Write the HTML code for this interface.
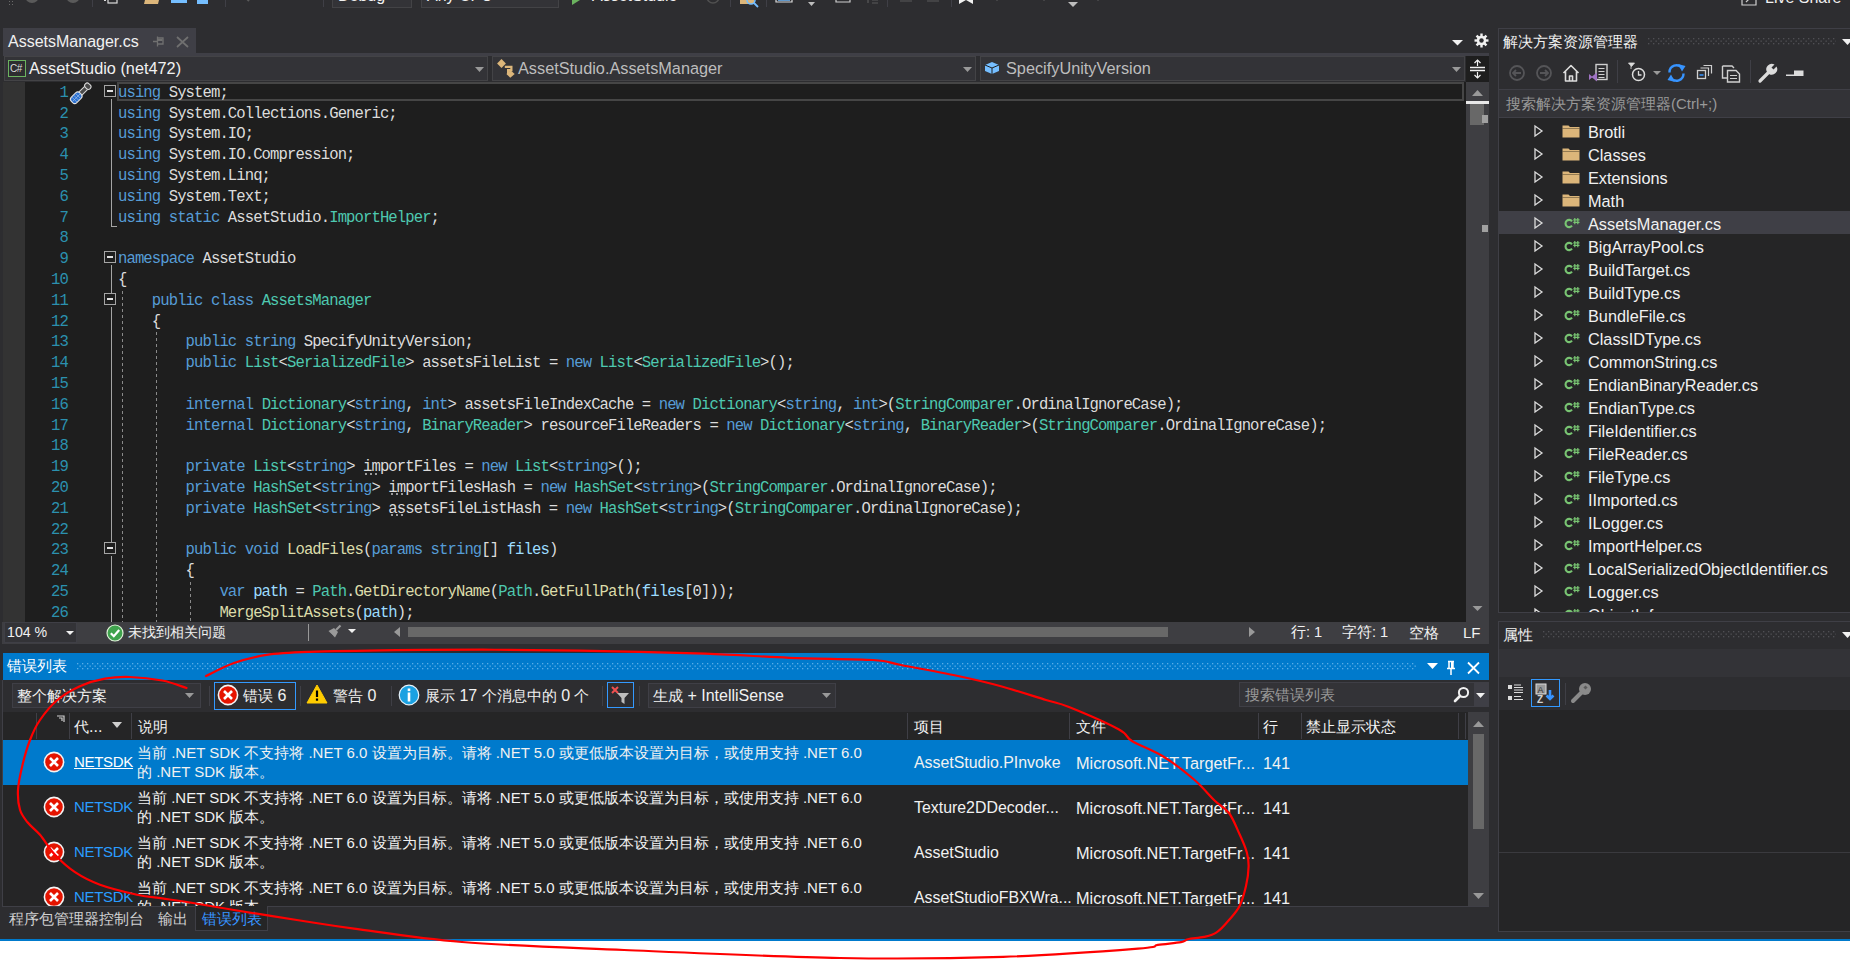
<!DOCTYPE html>
<html><head><meta charset="utf-8">
<style>
*{margin:0;padding:0;box-sizing:border-box}
html,body{width:1850px;height:961px;overflow:hidden;background:#2d2d30;font-family:"Liberation Sans",sans-serif;font-size:16px;color:#f1f1f1}
.a{position:absolute}
.t{position:absolute;white-space:nowrap;line-height:1}
.cl{position:absolute;left:118px;height:21px;line-height:20.8px;font-family:"Liberation Mono",monospace;font-size:15.6px;letter-spacing:-0.91px;white-space:pre;color:#dcdcdc}
.ln{position:absolute;left:20px;width:48px;text-align:right;height:21px;line-height:20.8px;font-family:"Liberation Mono",monospace;font-size:15.6px;letter-spacing:-0.91px;color:#2b91af}
.k{color:#569cd6}.ty{color:#4ec9b0}.m{color:#dcdcaa}.p{color:#9cdcfe}
svg{position:absolute;overflow:visible}
.c{font-size:15px}
</style></head><body>

<div class="a" style="left:0px;top:0px;width:1850px;height:28px;background:#2d2d30;"></div>
<div class="a" style="left:8px;top:0px;width:6px;height:7px;background-image:radial-gradient(circle,#6a6a6a 0.7px,transparent 1px);background-size:3px 3px"></div>
<svg style="left:0;top:0" width="1850" height="14">
<circle cx="32" cy="-4" r="7" fill="#5a5a5a"/><circle cx="73" cy="-4" r="7" fill="#5a5a5a"/>
<path d="M92.5 0 V7" stroke="#3f3f46"/>
<rect x="108" y="-6" width="9" height="9" stroke="#dcdcdc" stroke-width="1.2" fill="none"/><rect x="104" y="-1" width="2" height="2" fill="#dcdcdc"/>
<path d="M144 4 L146 -4 H160 L158 4 Z" fill="#dcb67a"/>
<rect x="171" y="-6" width="16" height="9" fill="#75beff"/><rect x="197" y="-6" width="11" height="10" fill="#75beff"/>
<path d="M225.5 0 V7" stroke="#3f3f46"/>
<path d="M242 -6 L249 1" stroke="#5a5a5a" stroke-width="2"/><path d="M291 -6 L286 -1" stroke="#5a5a5a" stroke-width="2"/>
<path d="M323.5 0 V7" stroke="#3f3f46"/>
<path d="M572 -6 L580 0 L572 5 Z" fill="#6bb35f"/>
<circle cx="713" cy="-3" r="6" stroke="#505050" stroke-width="1.5" fill="none"/>
<path d="M730.5 0 V7" stroke="#3f3f46"/><path d="M887.5 0 V7" stroke="#3f3f46"/>
<path d="M740 -4 H754 V4 H740 Z" fill="#dcb67a"/><circle cx="751" cy="0" r="4" stroke="#75beff" stroke-width="1.6" fill="none"/><path d="M754 3 L758 7" stroke="#75beff" stroke-width="1.8"/>
<path d="M766.5 0 V7" stroke="#3f3f46"/>
<path d="M776 -4 V2 H792 V-4" stroke="#dcdcdc" stroke-width="1.2" fill="none"/><path d="M778 0 H790" stroke="#75beff" stroke-width="1.5"/>
<path d="M808 2 H815 L811.5 6 Z" fill="#bdbdbd"/>
<path d="M836 -4 V2 H850 V-4" stroke="#cfcfcf" stroke-width="1.2" fill="none"/>
<path d="M868 -4 V3 M872 -4 H878 M872 0 H878 M872 3 H878" stroke="#5a5a5a" stroke-width="1.2" fill="none"/>
<path d="M900 1 H912 M927 1 H939" stroke="#5a5a5a" stroke-width="1.2"/>
<path d="M951.5 0 V7" stroke="#3f3f46"/>
<path d="M959 -6 V4 L966 0 L973 4 V-6" fill="#f1f1f1"/>
<path d="M993 -3 L997 1 L1001 -3" fill="#5a5a5a"/><path d="M1040 -3 L1044 1 L1048 -3" fill="#5a5a5a"/><path d="M1094 -3 L1098 1 L1102 -3" fill="#5a5a5a"/>
<path d="M1068 2 H1078 L1073 7 Z" fill="#bdbdbd"/>
<path d="M1742 -4 V5 H1756 V-4" stroke="#cfcfcf" stroke-width="1.2" fill="none"/><path d="M1746 2 L1752 -4" stroke="#cfcfcf" stroke-width="1.2"/>
</svg>
<div class="a" style="left:332px;top:-20px;width:80px;height:28px;background:#333337;border:1px solid #434346"></div>
<div class="t" style="left:338px;top:-12px;font-size:16px;color:#f1f1f1">Debug</div>
<div class="a" style="left:421px;top:-20px;width:138px;height:28px;background:#333337;border:1px solid #434346"></div>
<div class="t" style="left:427px;top:-12px;font-size:16px;color:#f1f1f1">Any CPU</div>
<div class="t" style="left:592px;top:-12px;font-size:16px;color:#f1f1f1">AssetStudio</div>
<div class="t" style="left:1765px;top:-10px;font-size:16px;color:#f1f1f1">Live Share</div>
<div class="a" style="left:3px;top:28px;width:193px;height:25px;background:#3f3f46;"></div>
<div class="t" style="left:8px;top:34px;color:#f1f1f1;font-size:16px;">AssetsManager.cs</div>
<svg style="left:150px;top:34px" width="16" height="14" viewBox="0 0 16 14">
<path d="M3 7.5 H7.5 M7.5 2.5 V12.5" stroke="#707070" stroke-width="1.3" fill="none"/>
<path d="M7.5 4 H13 V10 H7.5" stroke="#707070" stroke-width="1.3" fill="none"/><rect x="8" y="5" width="4.5" height="2" fill="#707070"/>
</svg>
<svg style="left:176px;top:36px" width="13" height="12" viewBox="0 0 13 12">
<path d="M1 1 L12 11 M12 1 L1 11" stroke="#707070" stroke-width="1.7"/>
</svg>
<svg style="left:1452px;top:39px" width="12" height="8"><path d="M0 1 H11 L5.5 6.5 Z" fill="#f1f1f1"/></svg>
<svg style="left:1474px;top:33px" width="15" height="15" viewBox="0 0 15 15">
<g fill="#f1f1f1"><circle cx="7.5" cy="7.5" r="4.8"/>
<rect x="6.3" y="0.5" width="2.4" height="14"/><rect x="0.5" y="6.3" width="14" height="2.4"/>
<rect x="6.3" y="0.5" width="2.4" height="14" transform="rotate(45 7.5 7.5)"/><rect x="6.3" y="0.5" width="2.4" height="14" transform="rotate(-45 7.5 7.5)"/>
</g><circle cx="7.5" cy="7.5" r="2.2" fill="#2d2d30"/></svg>
<div class="a" style="left:3px;top:53px;width:1486px;height:3px;background:#3f3f46;"></div>
<div class="a" style="left:3px;top:56px;width:1486px;height:26px;background:#2d2d30;"></div>
<div class="a" style="left:4px;top:56px;width:484px;height:25px;background:#333337;border:1px solid #434346"></div>
<svg style="left:475px;top:67px" width="9" height="5"><path d="M0 0 H9 L4.5 5 Z" fill="#999999"/></svg>
<div class="a" style="left:492px;top:56px;width:484px;height:25px;background:#333337;border:1px solid #434346"></div>
<svg style="left:963px;top:67px" width="9" height="5"><path d="M0 0 H9 L4.5 5 Z" fill="#999999"/></svg>
<div class="a" style="left:980px;top:56px;width:485px;height:25px;background:#333337;border:1px solid #434346"></div>
<svg style="left:1452px;top:67px" width="9" height="5"><path d="M0 0 H9 L4.5 5 Z" fill="#999999"/></svg>
<div class="a" style="left:8px;top:60px;width:18px;height:17px;border:1.5px solid #6bb35f;background:#2d2d30"></div>
<div class="t" style="left:10px;top:64px;font-size:10px;color:#dcdcdc;letter-spacing:-0.5px">C#</div>
<div class="t" style="left:29px;top:60px;color:#f1f1f1;font-size:16.3px;">AssetStudio (net472)</div>
<svg style="left:496px;top:58px" width="22" height="22" viewBox="0 0 20 20">
<path d="M5 1 L9 5 L5 9 L1 5 Z" fill="#dcb67a"/>
<path d="M8 8 H14 V11 H11 V14 H14" stroke="#dcb67a" stroke-width="2" fill="none"/>
<path d="M13 11 L17 14.5 L13 18 L9.5 14.5 Z" fill="#dcb67a"/>
</svg>
<div class="t" style="left:518px;top:60px;color:#bdbdbd;font-size:16.3px;">AssetStudio.AssetsManager</div>
<svg style="left:984px;top:61px" width="16" height="14" viewBox="0 0 16 14">
<path d="M1 4 L8 1 L15 4 L15 10 L8 13 L1 10 Z" fill="#75beff"/>
<path d="M1 4 L8 7 L15 4 M8 7 V13" stroke="#1e1e1e" stroke-width="1" fill="none"/>
</svg>
<div class="t" style="left:1006px;top:60px;color:#bdbdbd;font-size:16.3px;">SpecifyUnityVersion</div>
<div class="a" style="left:1466px;top:56px;width:23px;height:26px;background:#1e1e1e;"></div>
<svg style="left:1469px;top:59px" width="17" height="20" viewBox="0 0 17 20">
<path d="M1 8.5 H16 M1 11.5 H16" stroke="#f1f1f1" stroke-width="1.5"/>
<path d="M8.5 1 V7 M8.5 13 V19" stroke="#f1f1f1" stroke-width="1.2"/>
<path d="M5.5 4 L8.5 1 L11.5 4 M5.5 16 L8.5 19 L11.5 16" stroke="#f1f1f1" stroke-width="1.2" fill="none"/>
</svg>
<div class="a" style="left:3px;top:82px;width:1463px;height:540px;background:#1e1e1e;"></div>
<div class="a" style="left:3px;top:82px;width:22px;height:540px;background:#333333;"></div>
<div class="a" style="left:117px;top:82px;width:1347px;height:19px;border:2px solid #464646"></div>
<div class="ln" style="top:82.70px">1</div>
<div class="cl" style="top:82.70px"><span class="k">using</span> System;</div>
<div class="ln" style="top:103.50px">2</div>
<div class="cl" style="top:103.50px"><span class="k">using</span> System.Collections.Generic;</div>
<div class="ln" style="top:124.30px">3</div>
<div class="cl" style="top:124.30px"><span class="k">using</span> System.IO;</div>
<div class="ln" style="top:145.10px">4</div>
<div class="cl" style="top:145.10px"><span class="k">using</span> System.IO.Compression;</div>
<div class="ln" style="top:165.90px">5</div>
<div class="cl" style="top:165.90px"><span class="k">using</span> System.Linq;</div>
<div class="ln" style="top:186.70px">6</div>
<div class="cl" style="top:186.70px"><span class="k">using</span> System.Text;</div>
<div class="ln" style="top:207.50px">7</div>
<div class="cl" style="top:207.50px"><span class="k">using</span> <span class="k">static</span> AssetStudio.<span class="ty">ImportHelper</span>;</div>
<div class="ln" style="top:228.30px">8</div>
<div class="ln" style="top:249.10px">9</div>
<div class="cl" style="top:249.10px"><span class="k">namespace</span> AssetStudio</div>
<div class="ln" style="top:269.90px">10</div>
<div class="cl" style="top:269.90px">{</div>
<div class="ln" style="top:290.70px">11</div>
<div class="cl" style="top:290.70px">    <span class="k">public</span> <span class="k">class</span> <span class="ty">AssetsManager</span></div>
<div class="ln" style="top:311.50px">12</div>
<div class="cl" style="top:311.50px">    {</div>
<div class="ln" style="top:332.30px">13</div>
<div class="cl" style="top:332.30px">        <span class="k">public</span> <span class="k">string</span> SpecifyUnityVersion;</div>
<div class="ln" style="top:353.10px">14</div>
<div class="cl" style="top:353.10px">        <span class="k">public</span> <span class="ty">List</span>&lt;<span class="ty">SerializedFile</span>&gt; assetsFileList = <span class="k">new</span> <span class="ty">List</span>&lt;<span class="ty">SerializedFile</span>&gt;();</div>
<div class="ln" style="top:373.90px">15</div>
<div class="ln" style="top:394.70px">16</div>
<div class="cl" style="top:394.70px">        <span class="k">internal</span> <span class="ty">Dictionary</span>&lt;<span class="k">string</span>, <span class="k">int</span>&gt; assetsFileIndexCache = <span class="k">new</span> <span class="ty">Dictionary</span>&lt;<span class="k">string</span>, <span class="k">int</span>&gt;(<span class="ty">StringComparer</span>.OrdinalIgnoreCase);</div>
<div class="ln" style="top:415.50px">17</div>
<div class="cl" style="top:415.50px">        <span class="k">internal</span> <span class="ty">Dictionary</span>&lt;<span class="k">string</span>, <span class="ty">BinaryReader</span>&gt; resourceFileReaders = <span class="k">new</span> <span class="ty">Dictionary</span>&lt;<span class="k">string</span>, <span class="ty">BinaryReader</span>&gt;(<span class="ty">StringComparer</span>.OrdinalIgnoreCase);</div>
<div class="ln" style="top:436.30px">18</div>
<div class="ln" style="top:457.10px">19</div>
<div class="cl" style="top:457.10px">        <span class="k">private</span> <span class="ty">List</span>&lt;<span class="k">string</span>&gt; importFiles = <span class="k">new</span> <span class="ty">List</span>&lt;<span class="k">string</span>&gt;();</div>
<div class="ln" style="top:477.90px">20</div>
<div class="cl" style="top:477.90px">        <span class="k">private</span> <span class="ty">HashSet</span>&lt;<span class="k">string</span>&gt; importFilesHash = <span class="k">new</span> <span class="ty">HashSet</span>&lt;<span class="k">string</span>&gt;(<span class="ty">StringComparer</span>.OrdinalIgnoreCase);</div>
<div class="ln" style="top:498.70px">21</div>
<div class="cl" style="top:498.70px">        <span class="k">private</span> <span class="ty">HashSet</span>&lt;<span class="k">string</span>&gt; assetsFileListHash = <span class="k">new</span> <span class="ty">HashSet</span>&lt;<span class="k">string</span>&gt;(<span class="ty">StringComparer</span>.OrdinalIgnoreCase);</div>
<div class="ln" style="top:519.50px">22</div>
<div class="ln" style="top:540.30px">23</div>
<div class="cl" style="top:540.30px">        <span class="k">public</span> <span class="k">void</span> <span class="m">LoadFiles</span>(<span class="k">params</span> <span class="k">string</span>[] <span class="p">files</span>)</div>
<div class="ln" style="top:561.10px">24</div>
<div class="cl" style="top:561.10px">        {</div>
<div class="ln" style="top:581.90px">25</div>
<div class="cl" style="top:581.90px">            <span class="k">var</span> <span class="p">path</span> = <span class="ty">Path</span>.<span class="m">GetDirectoryName</span>(<span class="ty">Path</span>.<span class="m">GetFullPath</span>(<span class="p">files</span>[0]));</div>
<div class="ln" style="top:602.70px">26</div>
<div class="cl" style="top:602.70px">            <span class="m">MergeSplitAssets</span>(<span class="p">path</span>);</div>
<div class="a" style="left:104px;top:84.7px;width:12px;height:12px;border:1px solid #a5a5a5;background:#1e1e1e"></div>
<div class="a" style="left:107px;top:89.7px;width:6px;height:2px;background:#e0e0e0"></div>
<div class="a" style="left:104px;top:251.1px;width:12px;height:12px;border:1px solid #a5a5a5;background:#1e1e1e"></div>
<div class="a" style="left:107px;top:256.1px;width:6px;height:2px;background:#e0e0e0"></div>
<div class="a" style="left:104px;top:292.7px;width:12px;height:12px;border:1px solid #a5a5a5;background:#1e1e1e"></div>
<div class="a" style="left:107px;top:297.7px;width:6px;height:2px;background:#e0e0e0"></div>
<div class="a" style="left:104px;top:542.3px;width:12px;height:12px;border:1px solid #a5a5a5;background:#1e1e1e"></div>
<div class="a" style="left:107px;top:547.3px;width:6px;height:2px;background:#e0e0e0"></div>
<div class="a" style="left:110.5px;top:98.7px;width:1px;height:127.8px;background:#a5a5a5"></div>
<div class="a" style="left:110.5px;top:225.5px;width:6px;height:1.5px;background:#a5a5a5"></div>
<div class="a" style="left:110.5px;top:265.1px;width:1px;height:27.6px;background:#a5a5a5"></div>
<div class="a" style="left:110.5px;top:306.7px;width:1px;height:235.6px;background:#a5a5a5"></div>
<div class="a" style="left:110.5px;top:556.3px;width:1px;height:65.7px;background:#a5a5a5"></div>
<div class="a" style="left:122px;top:290.7px;width:1px;height:331.3px;background:repeating-linear-gradient(#8a8a8a 0 3px,transparent 3px 6px)"></div>
<div class="a" style="left:156px;top:332.3px;width:1px;height:289.7px;background:repeating-linear-gradient(#8a8a8a 0 3px,transparent 3px 6px)"></div>
<div class="a" style="left:190px;top:581.9px;width:1px;height:40.1px;background:repeating-linear-gradient(#8a8a8a 0 3px,transparent 3px 6px)"></div>
<svg style="left:0;top:0" width="200" height="120">
<g transform="translate(0.5 1.5) rotate(-45 80 92) translate(80 92) scale(0.86) translate(-80 -92)">
<rect x="79" y="89.5" width="13" height="5" rx="1" fill="#4a4a4a" stroke="#d8d8d8" stroke-width="1.2"/>
<rect x="89" y="88" width="6" height="8" rx="3" fill="#4a4a4a" stroke="#d8d8d8" stroke-width="1.2"/>
<rect x="66" y="87.5" width="14" height="9" rx="3.5" fill="#2a6fcf" stroke="#e0e0e0" stroke-width="1.3"/>
<path d="M70 88 V96 M73 88 V96 M76 88 V96 M67 92 H80" stroke="#a8c8f0" stroke-width="0.7"/>
</g></svg>
<div class="a" style="left:1466px;top:82px;width:23px;height:540px;background:#3e3e42;"></div>
<svg style="left:1466px;top:82px" width="23" height="540"><path d="M6 14 L11.5 8 L17 14 Z" fill="#999"/><path d="M6.5 524 L11.5 529 L16.5 524 Z" fill="#999"/></svg>
<div class="a" style="left:1466px;top:101px;width:23px;height:3px;background:#e8e8e8;"></div>
<div class="a" style="left:1470px;top:104px;width:14px;height:21px;background:#686868;"></div>
<div class="a" style="left:1482px;top:115px;width:6px;height:8px;background:#a0a0a0;"></div>
<div class="a" style="left:1482px;top:225px;width:6px;height:7px;background:#a0a0a0;"></div>
<div class="a" style="left:365px;top:472.6px;width:2px;height:2px;background:#9a9a9a"></div>
<div class="a" style="left:370px;top:472.6px;width:2px;height:2px;background:#9a9a9a"></div>
<div class="a" style="left:375px;top:472.6px;width:2px;height:2px;background:#9a9a9a"></div>
<div class="a" style="left:391px;top:493.4px;width:2px;height:2px;background:#9a9a9a"></div>
<div class="a" style="left:396px;top:493.4px;width:2px;height:2px;background:#9a9a9a"></div>
<div class="a" style="left:401px;top:493.4px;width:2px;height:2px;background:#9a9a9a"></div>
<div class="a" style="left:391px;top:514.2px;width:2px;height:2px;background:#9a9a9a"></div>
<div class="a" style="left:396px;top:514.2px;width:2px;height:2px;background:#9a9a9a"></div>
<div class="a" style="left:401px;top:514.2px;width:2px;height:2px;background:#9a9a9a"></div>
<div class="a" style="left:2px;top:622px;width:1487px;height:22px;background:#3e3e42;"></div>
<div class="a" style="left:4px;top:622px;width:73px;height:21px;background:#333337;border:1px solid #3f3f46"></div>
<div class="t" style="left:7px;top:625px;color:#f1f1f1;font-size:14.2px;">104 %</div>
<svg style="left:66px;top:631px" width="8" height="4"><path d="M0 0 H8 L4 4 Z" fill="#f1f1f1"/></svg>
<svg style="left:106px;top:624px" width="18" height="18" viewBox="0 0 18 18">
<circle cx="9" cy="9" r="8" fill="#3fa34d" stroke="#dff0d8" stroke-width="1.2"/>
<path d="M4.8 9.2 L7.8 12.2 L13.2 6" stroke="#fff" stroke-width="2.2" fill="none"/></svg>
<div class="t" style="left:128px;top:625px;color:#f1f1f1;font-size:14px;letter-spacing:0px"><span style="font-size:14px">未找到相关问题</span></div>
<div class="a" style="left:308px;top:624px;width:1px;height:17px;background:#999999;"></div>
<svg style="left:327px;top:624px" width="32" height="16" viewBox="0 0 32 16">
<path d="M1.5 7 L7 4 L11 8 L8 13.5 Z" fill="#9a9a9a"/><path d="M9 6 L13.5 1.5" stroke="#9a9a9a" stroke-width="2.2"/><path d="M3.5 9.5 L6 12" stroke="#3e3e42" stroke-width="0.8"/>
<path d="M21 5 H29 L25 9 Z" fill="#f1f1f1"/></svg>
<svg style="left:394px;top:627px" width="7" height="10"><path d="M6 0 V10 L0 5 Z" fill="#999"/></svg>
<div class="a" style="left:408px;top:627px;width:760px;height:10px;background:#686868;"></div>
<svg style="left:1249px;top:627px" width="7" height="10"><path d="M0 0 V10 L6 5 Z" fill="#999"/></svg>
<div class="t" style="left:1291px;top:625px;color:#f1f1f1;font-size:14.6px;"><span style="font-size:14.6px">行</span>: 1</div>
<div class="t" style="left:1342px;top:625px;color:#f1f1f1;font-size:14.6px;"><span style="font-size:14.6px">字符</span>: 1</div>
<div class="t" style="left:1409px;top:625px;color:#f1f1f1;font-size:15px;"><span style="font-size:15px">空格</span></div>
<div class="t" style="left:1463px;top:625px;color:#f1f1f1;font-size:15px;">LF</div>
<div class="a" style="left:3px;top:653px;width:1486px;height:27px;background:#007acc;"></div>
<div class="t" style="left:7px;top:658px;color:#ffffff;font-size:16px;"><span style="font-size:15px">错误列表</span></div>
<svg style="left:77px;top:663px" width="1340" height="7"><defs><pattern id="gp1" patternUnits="userSpaceOnUse" width="5" height="5"><rect x="0" y="0" width="1.3" height="1.3" fill="#5aaee8"/><rect x="2.5" y="2.5" width="1.3" height="1.3" fill="#5aaee8"/></pattern></defs><rect width="1340" height="7" fill="url(#gp1)"/></svg>
<svg style="left:1426px;top:661px" width="60" height="14">
<path d="M1 2 H12 L6.5 8 Z" fill="#fff"/>
<path d="M22 0.5 H28 M23 0.5 V7.5 M27 0.5 V7.5 M21 7.5 H29 M25 7.5 V14" stroke="#fff" stroke-width="1.5" fill="none"/><rect x="25" y="1" width="2" height="6" fill="#fff"/>
<path d="M42 1.5 L53 12.5 M53 1.5 L42 12.5" stroke="#fff" stroke-width="1.8"/>
</svg>
<div class="a" style="left:3px;top:680px;width:1486px;height:32px;background:#2d2d30;"></div>
<div class="a" style="left:12px;top:683px;width:189px;height:25px;background:#333337;border:1px solid #3f3f46"></div>
<div class="t" style="left:17px;top:688px;color:#f1f1f1;font-size:16px;"><span style="font-size:15px">整个解决方案</span></div>
<svg style="left:185px;top:693px" width="9" height="5"><path d="M0 0 H9 L4.5 5 Z" fill="#999"/></svg>
<div class="a" style="left:209px;top:686px;width:1px;height:20px;background:#3f3f46;"></div>
<div class="a" style="left:214px;top:682px;width:82px;height:28px;border:1px solid #3399ff;background:#2d2d30"></div>
<svg style="left:217px;top:684px" width="22" height="22" viewBox="0 0 22 22">
<circle cx="11" cy="11" r="9.6" fill="#e51400" stroke="#f4f4f4" stroke-width="1.6"/>
<path d="M7 7 L15 15 M15 7 L7 15" stroke="#fff" stroke-width="2.6"/></svg>
<div class="t" style="left:243px;top:688px;color:#f1f1f1;font-size:16px;"><span style="font-size:15px">错误</span> 6</div>
<div class="a" style="left:300px;top:686px;width:1px;height:20px;background:#3f3f46;"></div>
<svg style="left:306px;top:684px" width="22" height="20" viewBox="0 0 22 20">
<path d="M11 1 L21 19 H1 Z" fill="#ffcc00" stroke="#ffcc00" stroke-width="1" stroke-linejoin="round"/>
<path d="M11 6.5 V13" stroke="#000" stroke-width="2.2"/><rect x="9.9" y="14.5" width="2.2" height="2.2" fill="#000"/></svg>
<div class="t" style="left:333px;top:688px;color:#f1f1f1;font-size:16px;"><span style="font-size:15px">警告</span> 0</div>
<div class="a" style="left:391px;top:686px;width:1px;height:20px;background:#3f3f46;"></div>
<svg style="left:398px;top:684px" width="22" height="22" viewBox="0 0 22 22">
<circle cx="11" cy="11" r="9.8" fill="#1ba1e2" stroke="#e8f4fc" stroke-width="1.2"/>
<rect x="9.7" y="4.5" width="2.6" height="2.6" fill="#fff"/><rect x="9.7" y="8.5" width="2.6" height="9" fill="#fff"/></svg>
<div class="t" style="left:425px;top:688px;color:#f1f1f1;font-size:16px;"><span style="font-size:15px">展示</span> 17 <span style="font-size:15px">个消息中的</span> 0 <span style="font-size:15px">个</span></div>
<div class="a" style="left:602px;top:686px;width:1px;height:20px;background:#3f3f46;"></div>
<div class="a" style="left:607px;top:682px;width:27px;height:26px;border:1px solid #3399ff;background:#2d2d30"></div>
<svg style="left:610px;top:685px" width="22" height="20" viewBox="0 0 22 20">
<path d="M2 2 L8 8 M8 2 L2 8" stroke="#f05050" stroke-width="2"/>
<path d="M7 8 H19 L14.5 13 V19 L11.5 17 V13 Z" fill="#bdbdbd"/></svg>
<div class="a" style="left:639px;top:686px;width:1px;height:20px;background:#3f3f46;"></div>
<div class="a" style="left:648px;top:683px;width:188px;height:25px;background:#333337;border:1px solid #3f3f46"></div>
<div class="t" style="left:653px;top:688px;color:#f1f1f1;font-size:16px;"><span style="font-size:15px">生成</span> + IntelliSense</div>
<svg style="left:822px;top:693px" width="9" height="5"><path d="M0 0 H9 L4.5 5 Z" fill="#999"/></svg>
<div class="a" style="left:1239px;top:682px;width:235px;height:25px;background:#333337;border:1px solid #3f3f46;border-right:none"></div>
<div class="t" style="left:1245px;top:687px;color:#999999;font-size:16px;"><span style="font-size:15px">搜索错误列表</span></div>
<svg style="left:1453px;top:686px" width="17" height="17" viewBox="0 0 17 17">
<circle cx="10.5" cy="6.5" r="4.6" stroke="#f1f1f1" stroke-width="2" fill="none"/>
<path d="M7 10 L2 15" stroke="#f1f1f1" stroke-width="2.6" stroke-linecap="round"/></svg>
<div class="a" style="left:1474px;top:682px;width:15px;height:25px;background:#3f3f46;"></div>
<svg style="left:1476px;top:693px" width="9" height="5"><path d="M0 0 H9 L4.5 5 Z" fill="#f1f1f1"/></svg>
<div class="a" style="left:3px;top:712px;width:1465px;height:195px;background:#252526;"></div>
<div class="a" style="left:3px;top:712px;width:1465px;height:28px;background:#252526;"></div>
<div class="a" style="left:36px;top:713px;width:1px;height:26px;background:#3f3f46;"></div>
<div class="a" style="left:69px;top:713px;width:1px;height:26px;background:#3f3f46;"></div>
<div class="a" style="left:131px;top:713px;width:1px;height:26px;background:#3f3f46;"></div>
<div class="a" style="left:907px;top:713px;width:1px;height:26px;background:#3f3f46;"></div>
<div class="a" style="left:1069px;top:713px;width:1px;height:26px;background:#3f3f46;"></div>
<div class="a" style="left:1258px;top:713px;width:1px;height:26px;background:#3f3f46;"></div>
<div class="a" style="left:1301px;top:713px;width:1px;height:26px;background:#3f3f46;"></div>
<div class="a" style="left:1458px;top:713px;width:1px;height:26px;background:#3f3f46;"></div>
<div class="a" style="left:1465px;top:713px;width:1px;height:26px;background:#3f3f46;"></div>
<svg style="left:57px;top:716px" width="8" height="7"><path d="M0 0 H7 V6 M2 2 H5 V5" stroke="#cfcfcf" stroke-width="1.2" fill="none"/></svg>
<div class="t" style="left:74px;top:719px;color:#f1f1f1;font-size:16px;"><span style="font-size:15px">代</span>...</div>
<svg style="left:112px;top:722px" width="10" height="6"><path d="M0 0 H10 L5 6 Z" fill="#cfcfcf"/></svg>
<div class="t" style="left:138px;top:719px;color:#f1f1f1;font-size:16px;"><span style="font-size:15px">说明</span></div>
<div class="t" style="left:914px;top:719px;color:#f1f1f1;font-size:16px;"><span style="font-size:15px">项目</span></div>
<div class="t" style="left:1076px;top:719px;color:#f1f1f1;font-size:16px;"><span style="font-size:15px">文件</span></div>
<div class="t" style="left:1263px;top:719px;color:#f1f1f1;font-size:16px;"><span style="font-size:15px">行</span></div>
<div class="t" style="left:1306px;top:719px;color:#f1f1f1;font-size:16px;"><span style="font-size:15px">禁止显示状态</span></div>
<div class="a" style="left:0px;top:740px;width:1468px;height:166px;overflow:hidden">
<div class="a" style="left:3px;top:0px;width:1465px;height:45px;background:#007acc"></div>
<svg style="left:43px;top:11px" width="22" height="22" viewBox="0 0 22 22">
<circle cx="11" cy="11" r="9.6" fill="#e51400" stroke="#f4f4f4" stroke-width="1.6"/>
<path d="M7 7 L15 15 M15 7 L7 15" stroke="#fff" stroke-width="2.6"/></svg>
<div class="t" style="left:74px;top:14px;color:#ffffff;font-size:15px;text-decoration:underline;letter-spacing:-0.3px">NETSDK</div>
<div class="t" style="left:137px;top:5px;color:#f1f1f1;font-size:15px;"><span style="font-size:15px">当前</span> .NET SDK <span style="font-size:15px">不支持将</span> .NET 6.0 <span style="font-size:15px">设置为目标。请将</span> .NET 5.0 <span style="font-size:15px">或更低版本设置为目标，或使用支持</span> .NET 6.0</div>
<div class="t" style="left:137px;top:24px;color:#f1f1f1;font-size:15px;"><span style="font-size:15px">的</span> .NET SDK <span style="font-size:15px">版本。</span></div>
<div class="t" style="left:914px;top:15px;color:#f1f1f1;font-size:15.9px;">AssetStudio.PInvoke</div>
<div class="t" style="left:1076px;top:15px;color:#f1f1f1;font-size:16.3px;">Microsoft.NET.TargetFr...</div>
<div class="t" style="left:1263px;top:15px;color:#f1f1f1;font-size:16.3px;">141</div>
<svg style="left:43px;top:56px" width="22" height="22" viewBox="0 0 22 22">
<circle cx="11" cy="11" r="9.6" fill="#e51400" stroke="#f4f4f4" stroke-width="1.6"/>
<path d="M7 7 L15 15 M15 7 L7 15" stroke="#fff" stroke-width="2.6"/></svg>
<div class="t" style="left:74px;top:59px;color:#2a9dff;font-size:15px;letter-spacing:-0.3px">NETSDK</div>
<div class="t" style="left:137px;top:50px;color:#f1f1f1;font-size:15px;"><span style="font-size:15px">当前</span> .NET SDK <span style="font-size:15px">不支持将</span> .NET 6.0 <span style="font-size:15px">设置为目标。请将</span> .NET 5.0 <span style="font-size:15px">或更低版本设置为目标，或使用支持</span> .NET 6.0</div>
<div class="t" style="left:137px;top:69px;color:#f1f1f1;font-size:15px;"><span style="font-size:15px">的</span> .NET SDK <span style="font-size:15px">版本。</span></div>
<div class="t" style="left:914px;top:60px;color:#f1f1f1;font-size:15.9px;">Texture2DDecoder...</div>
<div class="t" style="left:1076px;top:60px;color:#f1f1f1;font-size:16.3px;">Microsoft.NET.TargetFr...</div>
<div class="t" style="left:1263px;top:60px;color:#f1f1f1;font-size:16.3px;">141</div>
<svg style="left:43px;top:101px" width="22" height="22" viewBox="0 0 22 22">
<circle cx="11" cy="11" r="9.6" fill="#e51400" stroke="#f4f4f4" stroke-width="1.6"/>
<path d="M7 7 L15 15 M15 7 L7 15" stroke="#fff" stroke-width="2.6"/></svg>
<div class="t" style="left:74px;top:104px;color:#2a9dff;font-size:15px;letter-spacing:-0.3px">NETSDK</div>
<div class="t" style="left:137px;top:95px;color:#f1f1f1;font-size:15px;"><span style="font-size:15px">当前</span> .NET SDK <span style="font-size:15px">不支持将</span> .NET 6.0 <span style="font-size:15px">设置为目标。请将</span> .NET 5.0 <span style="font-size:15px">或更低版本设置为目标，或使用支持</span> .NET 6.0</div>
<div class="t" style="left:137px;top:114px;color:#f1f1f1;font-size:15px;"><span style="font-size:15px">的</span> .NET SDK <span style="font-size:15px">版本。</span></div>
<div class="t" style="left:914px;top:105px;color:#f1f1f1;font-size:15.9px;">AssetStudio</div>
<div class="t" style="left:1076px;top:105px;color:#f1f1f1;font-size:16.3px;">Microsoft.NET.TargetFr...</div>
<div class="t" style="left:1263px;top:105px;color:#f1f1f1;font-size:16.3px;">141</div>
<svg style="left:43px;top:146px" width="22" height="22" viewBox="0 0 22 22">
<circle cx="11" cy="11" r="9.6" fill="#e51400" stroke="#f4f4f4" stroke-width="1.6"/>
<path d="M7 7 L15 15 M15 7 L7 15" stroke="#fff" stroke-width="2.6"/></svg>
<div class="t" style="left:74px;top:149px;color:#2a9dff;font-size:15px;letter-spacing:-0.3px">NETSDK</div>
<div class="t" style="left:137px;top:140px;color:#f1f1f1;font-size:15px;"><span style="font-size:15px">当前</span> .NET SDK <span style="font-size:15px">不支持将</span> .NET 6.0 <span style="font-size:15px">设置为目标。请将</span> .NET 5.0 <span style="font-size:15px">或更低版本设置为目标，或使用支持</span> .NET 6.0</div>
<div class="t" style="left:137px;top:159px;color:#f1f1f1;font-size:15px;"><span style="font-size:15px">的</span> .NET SDK <span style="font-size:15px">版本。</span></div>
<div class="t" style="left:914px;top:150px;color:#f1f1f1;font-size:15.9px;">AssetStudioFBXWra...</div>
<div class="t" style="left:1076px;top:150px;color:#f1f1f1;font-size:16.3px;">Microsoft.NET.TargetFr...</div>
<div class="t" style="left:1263px;top:150px;color:#f1f1f1;font-size:16.3px;">141</div>
</div>
<div class="a" style="left:1468px;top:712px;width:21px;height:195px;background:#3e3e42;"></div>
<svg style="left:1468px;top:712px" width="21" height="195"><path d="M5 15 L10.5 9 L16 15 Z" fill="#999"/><path d="M5 181 L10.5 187 L16 181 Z" fill="#999"/></svg>
<div class="a" style="left:1473px;top:734px;width:11px;height:95px;background:#686868;"></div>
<div class="a" style="left:3px;top:906px;width:1486px;height:1px;background:#3f3f46;"></div>
<div class="a" style="left:2px;top:680px;width:1px;height:227px;background:#3f3f46;"></div>
<div class="a" style="left:0px;top:907px;width:1489px;height:32px;background:#2d2d30;"></div>
<div class="t" style="left:9px;top:911px;color:#d0d0d0;font-size:15px;"><span style="font-size:15px">程序包管理器控制台</span></div>
<div class="t" style="left:158px;top:911px;color:#d0d0d0;font-size:15px;"><span style="font-size:15px">输出</span></div>
<div class="a" style="left:195px;top:906px;width:73px;height:25px;background:#252526;border:1px solid #3f3f46;border-top:none"></div>
<div class="t" style="left:202px;top:911px;color:#3794ff;font-size:15px;"><span style="font-size:15px">错误列表</span></div>
<div class="a" style="left:0px;top:939px;width:1850px;height:2px;background:#007acc;"></div>
<div class="a" style="left:0px;top:941px;width:1850px;height:20px;background:#ffffff;"></div>
<div class="a" style="left:1498px;top:28px;width:352px;height:585px;background:#3f3f46;"></div>
<div class="a" style="left:1499px;top:29px;width:351px;height:583px;background:#252526;"></div>
<div class="a" style="left:1499px;top:29px;width:351px;height:27px;background:#2d2d30;"></div>
<div class="t" style="left:1503px;top:34px;color:#f1f1f1;font-size:15px;"><span style="font-size:15px">解决方案资源管理器</span></div>
<svg style="left:1648px;top:38px" width="188" height="7"><defs><pattern id="gp2" patternUnits="userSpaceOnUse" width="5" height="5"><rect x="0" y="0" width="1.3" height="1.3" fill="#505054"/><rect x="2.5" y="2.5" width="1.3" height="1.3" fill="#505054"/></pattern></defs><rect width="188" height="7" fill="url(#gp2)"/></svg>
<svg style="left:1842px;top:39px" width="8" height="6"><path d="M0 0 H11 L5.5 6 Z" fill="#f1f1f1"/></svg>
<div class="a" style="left:1499px;top:56px;width:351px;height:33px;background:#2d2d30;"></div>
<svg style="left:0;top:0" width="1850" height="961">
<g stroke="#555558" stroke-width="1.8" fill="none"><circle cx="1517" cy="73" r="7"/><circle cx="1544" cy="73" r="7"/></g>
<g stroke="#555558" stroke-width="1.8" fill="none"><path d="M1521 73 H1513 M1516 70 L1513 73 L1516 76"/><path d="M1540 73 H1548 M1545 70 L1548 73 L1545 76"/></g>
<path d="M1563.5 73 L1571 65.5 L1578.5 73 M1565.5 71 V81 H1576.5 V71 M1569.5 81 V76 H1572.5 V81" stroke="#dcdcdc" stroke-width="1.6" fill="none" stroke-linejoin="round"/>
<rect x="1596" y="64.5" width="11" height="15" fill="#2d2d30" stroke="#cfcfcf" stroke-width="1.4"/>
<path d="M1598.5 68.5 H1604.5 M1598.5 71.5 H1604.5 M1598.5 74.5 H1604.5 M1598.5 77.5 H1604.5" stroke="#cfcfcf" stroke-width="1"/>
<path d="M1589 74 L1592 76.5 L1597 72.5 V81.5 L1592 77.5 L1589 80 Z" fill="#a074c4"/>
<path d="M1617.5 60 V83" stroke="#3f3f46" stroke-width="1"/>
<path d="M1628.5 63 H1634.5 L1631.5 66.5 Z M1631 66 V69" fill="#dcdcdc" stroke="#dcdcdc" stroke-width="0.8"/>
<circle cx="1638.5" cy="74.5" r="6" stroke="#dcdcdc" stroke-width="1.5" fill="none"/><path d="M1638.5 71 V75 H1641.5" stroke="#dcdcdc" stroke-width="1.3" fill="none"/>
<path d="M1653 71 H1661 L1657 75 Z" fill="#999999"/>
<path d="M1669.5 72.5 A7 7 0 0 1 1682 68" stroke="#3794ff" stroke-width="2.4" fill="none"/>
<path d="M1683.5 73.5 A7 7 0 0 1 1671 78" stroke="#3794ff" stroke-width="2.4" fill="none"/>
<path d="M1678 64 L1685.5 66 L1682 71.5 Z" fill="#3794ff"/><path d="M1675 82 L1667.5 80 L1671 74.5 Z" fill="#3794ff"/>
<rect x="1697.5" y="70.5" width="8" height="8" fill="#2d2d30" stroke="#cfcfcf" stroke-width="1.3"/>
<path d="M1700.5 68 H1708.5 V76 M1703.5 65.5 H1711.5 V73.5" stroke="#cfcfcf" stroke-width="1.2" fill="none"/>
<path d="M1699.5 75 H1703.5" stroke="#3794ff" stroke-width="1.5"/>
<path d="M1722.5 66 V78 H1727 M1722.5 66 H1732 L1734 68" stroke="#cfcfcf" stroke-width="1.4" fill="none"/>
<path d="M1727.5 70.5 H1736 L1739.5 74 V82 H1727.5 Z" fill="#2d2d30" stroke="#cfcfcf" stroke-width="1.4"/>
<path d="M1730 75.5 H1737 M1730 78.5 H1737" stroke="#cfcfcf" stroke-width="1"/>
<path d="M1750.5 60 V83" stroke="#3f3f46" stroke-width="1"/>
<path d="M1760 81 L1768 73" stroke="#dcdcdc" stroke-width="3.2" stroke-linecap="round"/>
<path d="M1767 72 A5.5 5.5 0 0 1 1774.5 64.5 L1771.5 67.5 L1773.5 69.5 L1776.5 66.5 A5.5 5.5 0 0 1 1769 74 Z" fill="#dcdcdc"/>
<path d="M1786 74.5 H1794 V70.5 H1803.5 V76 H1786 Z" fill="#dcdcdc"/>
</svg>
<div class="a" style="left:1499px;top:90px;width:351px;height:27px;background:#333337;"></div>
<div class="a" style="left:1499px;top:89px;width:351px;height:1px;background:#3f3f46;"></div>
<div class="a" style="left:1499px;top:117px;width:351px;height:1px;background:#3f3f46;"></div>
<div class="t" style="left:1506px;top:96px;color:#999999;font-size:15px;"><span style="font-size:15px">搜索解决方案资源管理器</span>(Ctrl+;)</div>
<div class="a" style="left:1499px;top:118px;width:351px;height:494px;overflow:hidden">
<svg style="left:35px;top:7px" width="9" height="12"><path d="M1 1 L8 6 L1 11 Z" stroke="#dcdcdc" stroke-width="1.3" fill="none"/></svg>
<svg style="left:63px;top:6px" width="18" height="14" viewBox="0 0 18 14"><path d="M0.5 1.5 H6.5 L8 3 H17.5 V13.5 H0.5 Z" fill="#dcb67a"/><path d="M0.5 4.5 H17.5" stroke="#2a2417" stroke-width="0.8" opacity="0.5"/></svg>
<div class="t" style="left:89px;top:6px;font-size:16.3px;color:#f1f1f1">Brotli</div>
<svg style="left:35px;top:30px" width="9" height="12"><path d="M1 1 L8 6 L1 11 Z" stroke="#dcdcdc" stroke-width="1.3" fill="none"/></svg>
<svg style="left:63px;top:29px" width="18" height="14" viewBox="0 0 18 14"><path d="M0.5 1.5 H6.5 L8 3 H17.5 V13.5 H0.5 Z" fill="#dcb67a"/><path d="M0.5 4.5 H17.5" stroke="#2a2417" stroke-width="0.8" opacity="0.5"/></svg>
<div class="t" style="left:89px;top:29px;font-size:16.3px;color:#f1f1f1">Classes</div>
<svg style="left:35px;top:53px" width="9" height="12"><path d="M1 1 L8 6 L1 11 Z" stroke="#dcdcdc" stroke-width="1.3" fill="none"/></svg>
<svg style="left:63px;top:52px" width="18" height="14" viewBox="0 0 18 14"><path d="M0.5 1.5 H6.5 L8 3 H17.5 V13.5 H0.5 Z" fill="#dcb67a"/><path d="M0.5 4.5 H17.5" stroke="#2a2417" stroke-width="0.8" opacity="0.5"/></svg>
<div class="t" style="left:89px;top:52px;font-size:16.3px;color:#f1f1f1">Extensions</div>
<svg style="left:35px;top:76px" width="9" height="12"><path d="M1 1 L8 6 L1 11 Z" stroke="#dcdcdc" stroke-width="1.3" fill="none"/></svg>
<svg style="left:63px;top:75px" width="18" height="14" viewBox="0 0 18 14"><path d="M0.5 1.5 H6.5 L8 3 H17.5 V13.5 H0.5 Z" fill="#dcb67a"/><path d="M0.5 4.5 H17.5" stroke="#2a2417" stroke-width="0.8" opacity="0.5"/></svg>
<div class="t" style="left:89px;top:75px;font-size:16.3px;color:#f1f1f1">Math</div>
<div class="a" style="left:0;top:93px;width:351px;height:23px;background:#3f3f46"></div>
<svg style="left:35px;top:99px" width="9" height="12"><path d="M1 1 L8 6 L1 11 Z" stroke="#dcdcdc" stroke-width="1.3" fill="none"/></svg>
<svg style="left:66px;top:99px" width="16" height="12" viewBox="0 0 16 12"><path d="M7 4.3 A3.6 3.6 0 1 0 7 8.7" stroke="#78c472" stroke-width="2.1" fill="none"/><path d="M9.8 1 V7.2 M12.8 1 V7.2 M8.3 2.9 H14.5 M8.3 5.3 H14.5" stroke="#78c472" stroke-width="1.2"/></svg>
<div class="t" style="left:89px;top:98px;font-size:16.3px;color:#f1f1f1">AssetsManager.cs</div>
<svg style="left:35px;top:122px" width="9" height="12"><path d="M1 1 L8 6 L1 11 Z" stroke="#dcdcdc" stroke-width="1.3" fill="none"/></svg>
<svg style="left:66px;top:122px" width="16" height="12" viewBox="0 0 16 12"><path d="M7 4.3 A3.6 3.6 0 1 0 7 8.7" stroke="#78c472" stroke-width="2.1" fill="none"/><path d="M9.8 1 V7.2 M12.8 1 V7.2 M8.3 2.9 H14.5 M8.3 5.3 H14.5" stroke="#78c472" stroke-width="1.2"/></svg>
<div class="t" style="left:89px;top:121px;font-size:16.3px;color:#f1f1f1">BigArrayPool.cs</div>
<svg style="left:35px;top:145px" width="9" height="12"><path d="M1 1 L8 6 L1 11 Z" stroke="#dcdcdc" stroke-width="1.3" fill="none"/></svg>
<svg style="left:66px;top:145px" width="16" height="12" viewBox="0 0 16 12"><path d="M7 4.3 A3.6 3.6 0 1 0 7 8.7" stroke="#78c472" stroke-width="2.1" fill="none"/><path d="M9.8 1 V7.2 M12.8 1 V7.2 M8.3 2.9 H14.5 M8.3 5.3 H14.5" stroke="#78c472" stroke-width="1.2"/></svg>
<div class="t" style="left:89px;top:144px;font-size:16.3px;color:#f1f1f1">BuildTarget.cs</div>
<svg style="left:35px;top:168px" width="9" height="12"><path d="M1 1 L8 6 L1 11 Z" stroke="#dcdcdc" stroke-width="1.3" fill="none"/></svg>
<svg style="left:66px;top:168px" width="16" height="12" viewBox="0 0 16 12"><path d="M7 4.3 A3.6 3.6 0 1 0 7 8.7" stroke="#78c472" stroke-width="2.1" fill="none"/><path d="M9.8 1 V7.2 M12.8 1 V7.2 M8.3 2.9 H14.5 M8.3 5.3 H14.5" stroke="#78c472" stroke-width="1.2"/></svg>
<div class="t" style="left:89px;top:167px;font-size:16.3px;color:#f1f1f1">BuildType.cs</div>
<svg style="left:35px;top:191px" width="9" height="12"><path d="M1 1 L8 6 L1 11 Z" stroke="#dcdcdc" stroke-width="1.3" fill="none"/></svg>
<svg style="left:66px;top:191px" width="16" height="12" viewBox="0 0 16 12"><path d="M7 4.3 A3.6 3.6 0 1 0 7 8.7" stroke="#78c472" stroke-width="2.1" fill="none"/><path d="M9.8 1 V7.2 M12.8 1 V7.2 M8.3 2.9 H14.5 M8.3 5.3 H14.5" stroke="#78c472" stroke-width="1.2"/></svg>
<div class="t" style="left:89px;top:190px;font-size:16.3px;color:#f1f1f1">BundleFile.cs</div>
<svg style="left:35px;top:214px" width="9" height="12"><path d="M1 1 L8 6 L1 11 Z" stroke="#dcdcdc" stroke-width="1.3" fill="none"/></svg>
<svg style="left:66px;top:214px" width="16" height="12" viewBox="0 0 16 12"><path d="M7 4.3 A3.6 3.6 0 1 0 7 8.7" stroke="#78c472" stroke-width="2.1" fill="none"/><path d="M9.8 1 V7.2 M12.8 1 V7.2 M8.3 2.9 H14.5 M8.3 5.3 H14.5" stroke="#78c472" stroke-width="1.2"/></svg>
<div class="t" style="left:89px;top:213px;font-size:16.3px;color:#f1f1f1">ClassIDType.cs</div>
<svg style="left:35px;top:237px" width="9" height="12"><path d="M1 1 L8 6 L1 11 Z" stroke="#dcdcdc" stroke-width="1.3" fill="none"/></svg>
<svg style="left:66px;top:237px" width="16" height="12" viewBox="0 0 16 12"><path d="M7 4.3 A3.6 3.6 0 1 0 7 8.7" stroke="#78c472" stroke-width="2.1" fill="none"/><path d="M9.8 1 V7.2 M12.8 1 V7.2 M8.3 2.9 H14.5 M8.3 5.3 H14.5" stroke="#78c472" stroke-width="1.2"/></svg>
<div class="t" style="left:89px;top:236px;font-size:16.3px;color:#f1f1f1">CommonString.cs</div>
<svg style="left:35px;top:260px" width="9" height="12"><path d="M1 1 L8 6 L1 11 Z" stroke="#dcdcdc" stroke-width="1.3" fill="none"/></svg>
<svg style="left:66px;top:260px" width="16" height="12" viewBox="0 0 16 12"><path d="M7 4.3 A3.6 3.6 0 1 0 7 8.7" stroke="#78c472" stroke-width="2.1" fill="none"/><path d="M9.8 1 V7.2 M12.8 1 V7.2 M8.3 2.9 H14.5 M8.3 5.3 H14.5" stroke="#78c472" stroke-width="1.2"/></svg>
<div class="t" style="left:89px;top:259px;font-size:16.3px;color:#f1f1f1">EndianBinaryReader.cs</div>
<svg style="left:35px;top:283px" width="9" height="12"><path d="M1 1 L8 6 L1 11 Z" stroke="#dcdcdc" stroke-width="1.3" fill="none"/></svg>
<svg style="left:66px;top:283px" width="16" height="12" viewBox="0 0 16 12"><path d="M7 4.3 A3.6 3.6 0 1 0 7 8.7" stroke="#78c472" stroke-width="2.1" fill="none"/><path d="M9.8 1 V7.2 M12.8 1 V7.2 M8.3 2.9 H14.5 M8.3 5.3 H14.5" stroke="#78c472" stroke-width="1.2"/></svg>
<div class="t" style="left:89px;top:282px;font-size:16.3px;color:#f1f1f1">EndianType.cs</div>
<svg style="left:35px;top:306px" width="9" height="12"><path d="M1 1 L8 6 L1 11 Z" stroke="#dcdcdc" stroke-width="1.3" fill="none"/></svg>
<svg style="left:66px;top:306px" width="16" height="12" viewBox="0 0 16 12"><path d="M7 4.3 A3.6 3.6 0 1 0 7 8.7" stroke="#78c472" stroke-width="2.1" fill="none"/><path d="M9.8 1 V7.2 M12.8 1 V7.2 M8.3 2.9 H14.5 M8.3 5.3 H14.5" stroke="#78c472" stroke-width="1.2"/></svg>
<div class="t" style="left:89px;top:305px;font-size:16.3px;color:#f1f1f1">FileIdentifier.cs</div>
<svg style="left:35px;top:329px" width="9" height="12"><path d="M1 1 L8 6 L1 11 Z" stroke="#dcdcdc" stroke-width="1.3" fill="none"/></svg>
<svg style="left:66px;top:329px" width="16" height="12" viewBox="0 0 16 12"><path d="M7 4.3 A3.6 3.6 0 1 0 7 8.7" stroke="#78c472" stroke-width="2.1" fill="none"/><path d="M9.8 1 V7.2 M12.8 1 V7.2 M8.3 2.9 H14.5 M8.3 5.3 H14.5" stroke="#78c472" stroke-width="1.2"/></svg>
<div class="t" style="left:89px;top:328px;font-size:16.3px;color:#f1f1f1">FileReader.cs</div>
<svg style="left:35px;top:352px" width="9" height="12"><path d="M1 1 L8 6 L1 11 Z" stroke="#dcdcdc" stroke-width="1.3" fill="none"/></svg>
<svg style="left:66px;top:352px" width="16" height="12" viewBox="0 0 16 12"><path d="M7 4.3 A3.6 3.6 0 1 0 7 8.7" stroke="#78c472" stroke-width="2.1" fill="none"/><path d="M9.8 1 V7.2 M12.8 1 V7.2 M8.3 2.9 H14.5 M8.3 5.3 H14.5" stroke="#78c472" stroke-width="1.2"/></svg>
<div class="t" style="left:89px;top:351px;font-size:16.3px;color:#f1f1f1">FileType.cs</div>
<svg style="left:35px;top:375px" width="9" height="12"><path d="M1 1 L8 6 L1 11 Z" stroke="#dcdcdc" stroke-width="1.3" fill="none"/></svg>
<svg style="left:66px;top:375px" width="16" height="12" viewBox="0 0 16 12"><path d="M7 4.3 A3.6 3.6 0 1 0 7 8.7" stroke="#78c472" stroke-width="2.1" fill="none"/><path d="M9.8 1 V7.2 M12.8 1 V7.2 M8.3 2.9 H14.5 M8.3 5.3 H14.5" stroke="#78c472" stroke-width="1.2"/></svg>
<div class="t" style="left:89px;top:374px;font-size:16.3px;color:#f1f1f1">IImported.cs</div>
<svg style="left:35px;top:398px" width="9" height="12"><path d="M1 1 L8 6 L1 11 Z" stroke="#dcdcdc" stroke-width="1.3" fill="none"/></svg>
<svg style="left:66px;top:398px" width="16" height="12" viewBox="0 0 16 12"><path d="M7 4.3 A3.6 3.6 0 1 0 7 8.7" stroke="#78c472" stroke-width="2.1" fill="none"/><path d="M9.8 1 V7.2 M12.8 1 V7.2 M8.3 2.9 H14.5 M8.3 5.3 H14.5" stroke="#78c472" stroke-width="1.2"/></svg>
<div class="t" style="left:89px;top:397px;font-size:16.3px;color:#f1f1f1">ILogger.cs</div>
<svg style="left:35px;top:421px" width="9" height="12"><path d="M1 1 L8 6 L1 11 Z" stroke="#dcdcdc" stroke-width="1.3" fill="none"/></svg>
<svg style="left:66px;top:421px" width="16" height="12" viewBox="0 0 16 12"><path d="M7 4.3 A3.6 3.6 0 1 0 7 8.7" stroke="#78c472" stroke-width="2.1" fill="none"/><path d="M9.8 1 V7.2 M12.8 1 V7.2 M8.3 2.9 H14.5 M8.3 5.3 H14.5" stroke="#78c472" stroke-width="1.2"/></svg>
<div class="t" style="left:89px;top:420px;font-size:16.3px;color:#f1f1f1">ImportHelper.cs</div>
<svg style="left:35px;top:444px" width="9" height="12"><path d="M1 1 L8 6 L1 11 Z" stroke="#dcdcdc" stroke-width="1.3" fill="none"/></svg>
<svg style="left:66px;top:444px" width="16" height="12" viewBox="0 0 16 12"><path d="M7 4.3 A3.6 3.6 0 1 0 7 8.7" stroke="#78c472" stroke-width="2.1" fill="none"/><path d="M9.8 1 V7.2 M12.8 1 V7.2 M8.3 2.9 H14.5 M8.3 5.3 H14.5" stroke="#78c472" stroke-width="1.2"/></svg>
<div class="t" style="left:89px;top:443px;font-size:16.3px;color:#f1f1f1">LocalSerializedObjectIdentifier.cs</div>
<svg style="left:35px;top:467px" width="9" height="12"><path d="M1 1 L8 6 L1 11 Z" stroke="#dcdcdc" stroke-width="1.3" fill="none"/></svg>
<svg style="left:66px;top:467px" width="16" height="12" viewBox="0 0 16 12"><path d="M7 4.3 A3.6 3.6 0 1 0 7 8.7" stroke="#78c472" stroke-width="2.1" fill="none"/><path d="M9.8 1 V7.2 M12.8 1 V7.2 M8.3 2.9 H14.5 M8.3 5.3 H14.5" stroke="#78c472" stroke-width="1.2"/></svg>
<div class="t" style="left:89px;top:466px;font-size:16.3px;color:#f1f1f1">Logger.cs</div>
<svg style="left:35px;top:490px" width="9" height="12"><path d="M1 1 L8 6 L1 11 Z" stroke="#dcdcdc" stroke-width="1.3" fill="none"/></svg>
<svg style="left:66px;top:490px" width="16" height="12" viewBox="0 0 16 12"><path d="M7 4.3 A3.6 3.6 0 1 0 7 8.7" stroke="#78c472" stroke-width="2.1" fill="none"/><path d="M9.8 1 V7.2 M12.8 1 V7.2 M8.3 2.9 H14.5 M8.3 5.3 H14.5" stroke="#78c472" stroke-width="1.2"/></svg>
<div class="t" style="left:89px;top:489px;font-size:16.3px;color:#f1f1f1">ObjectInfo.cs</div>
</div>
<div class="a" style="left:1498px;top:621px;width:352px;height:311px;background:#3f3f46;"></div>
<div class="a" style="left:1499px;top:622px;width:351px;height:309px;background:#252526;"></div>
<div class="a" style="left:1499px;top:622px;width:351px;height:27px;background:#2d2d30;"></div>
<div class="t" style="left:1503px;top:627px;color:#f1f1f1;font-size:15px;"><span style="font-size:15px">属性</span></div>
<svg style="left:1543px;top:631px" width="293" height="7"><defs><pattern id="gp3" patternUnits="userSpaceOnUse" width="5" height="5"><rect x="0" y="0" width="1.3" height="1.3" fill="#505054"/><rect x="2.5" y="2.5" width="1.3" height="1.3" fill="#505054"/></pattern></defs><rect width="293" height="7" fill="url(#gp3)"/></svg>
<svg style="left:1842px;top:632px" width="8" height="6"><path d="M0 0 H11 L5.5 6 Z" fill="#f1f1f1"/></svg>
<div class="a" style="left:1499px;top:649px;width:351px;height:28px;background:#333337;"></div>
<div class="a" style="left:1499px;top:677px;width:351px;height:33px;background:#2d2d30;"></div>
<svg style="left:1506px;top:683px" width="90" height="24" viewBox="0 0 90 24">
<g fill="#dcdcdc"><rect x="2" y="2" width="4" height="4"/><rect x="2" y="13" width="4" height="4"/>
<rect x="8" y="1.5" width="7" height="1"/><rect x="8" y="4" width="9" height="1"/><rect x="8" y="6.5" width="9" height="1"/><rect x="8" y="9" width="9" height="1"/><rect x="8" y="13" width="7" height="1"/><rect x="8" y="16" width="9" height="1"/></g>
</svg>
<div class="a" style="left:1531px;top:679px;width:29px;height:28px;border:1px solid #3399ff;background:#2d2d30"></div>
<svg style="left:1534px;top:682px" width="24" height="22" viewBox="0 0 24 22">
<rect x="2" y="2" width="10" height="10" fill="#9a9a9a" stroke="#dcdcdc" stroke-width="1"/><text x="3.5" y="10.5" font-size="9" font-family="Liberation Sans" fill="#333">A</text>
<text x="3" y="21" font-size="10" font-weight="bold" font-family="Liberation Sans" fill="#cfcfcf">Z</text>
<path d="M16 8 V17 M12.5 13.5 L16 17 L19.5 13.5" stroke="#3794ff" stroke-width="2.6" fill="none"/>
</svg>
<div class="a" style="left:1565px;top:683px;width:1px;height:22px;background:#3f3f46;"></div>
<svg style="left:1570px;top:682px" width="22" height="22" viewBox="0 0 22 22">
<circle cx="15" cy="7" r="6" fill="#8a8a8a"/><path d="M11 11 L3 19" stroke="#8a8a8a" stroke-width="4" stroke-linecap="round"/><rect x="14" y="4" width="3" height="3" fill="#5a5a5a" transform="rotate(45 15.5 5.5)"/>
</svg>
<div class="a" style="left:1499px;top:852px;width:351px;height:1px;background:#3a3a3e;"></div>
<svg style="left:0;top:0" width="1850" height="961"><path d="M206.0 676.0 C210.7 673.8 223.9 666.5 234.0 663.0 C244.1 659.5 253.9 656.8 266.5 654.9 C279.1 653.0 288.1 652.7 309.7 651.9 C331.3 651.1 367.2 650.5 396.0 650.1 C424.8 649.7 452.0 649.6 482.7 649.7 C513.4 649.8 543.0 650.0 580.0 650.6 C617.0 651.2 670.2 652.4 705.0 653.6 C739.8 654.8 761.0 656.7 789.0 657.8 C817.0 658.9 854.3 658.8 873.0 660.0 C891.7 661.2 886.8 662.3 901.0 665.0 C915.2 667.7 941.5 672.5 958.0 676.0 C974.5 679.5 985.3 682.0 1000.0 686.0 C1014.7 690.0 1034.5 696.5 1046.0 700.0 C1057.5 703.5 1056.8 702.1 1069.0 707.0 C1081.2 711.9 1108.5 723.8 1119.0 729.5 C1129.5 735.2 1124.5 736.4 1132.0 741.0 C1139.5 745.6 1153.7 750.6 1164.0 757.0 C1174.3 763.4 1185.5 772.2 1194.0 779.5 C1202.5 786.8 1209.0 795.1 1214.8 800.7 C1220.6 806.3 1224.8 807.4 1229.0 813.0 C1233.2 818.6 1236.7 828.0 1239.7 834.5 C1242.7 841.0 1245.3 847.0 1246.8 852.3 C1248.3 857.6 1248.7 860.9 1248.6 866.5 C1248.5 872.1 1247.5 879.5 1246.0 886.0 C1244.5 892.5 1242.5 900.0 1239.7 905.7 C1236.9 911.4 1232.8 915.5 1229.0 920.0 C1225.2 924.5 1220.8 929.6 1216.6 932.4 C1212.4 935.2 1208.8 935.8 1204.0 936.9 C1199.2 938.0 1191.8 938.3 1188.0 939.2 C1184.2 940.1 1186.0 941.2 1181.0 942.2 C1176.0 943.2 1165.0 943.8 1157.8 944.9 C1150.6 946.0 1163.8 946.6 1138.0 948.6 C1112.2 950.6 1052.7 955.2 1003.0 956.8 C953.3 958.4 903.2 959.1 840.0 958.0 C776.8 956.9 687.0 952.7 624.0 950.0 C561.0 947.3 507.0 945.6 462.0 942.0 C417.0 938.4 381.0 932.2 354.0 928.6 C327.0 925.0 320.0 923.6 300.0 920.5 C280.0 917.4 252.8 913.1 234.0 910.0 C215.2 906.9 199.0 903.9 187.0 902.0 C175.0 900.1 170.3 899.6 162.0 898.4 C153.7 897.2 147.3 897.0 137.0 894.7 C126.7 892.4 110.3 888.5 100.0 884.7 C89.7 881.0 82.5 877.2 75.0 872.2 C67.5 867.2 60.8 861.0 55.0 854.8 C49.2 848.6 44.6 840.2 40.0 834.8 C35.4 829.4 30.8 826.5 27.5 822.3 C24.2 818.1 21.6 815.2 20.0 809.8 C18.4 804.4 17.6 797.3 18.0 789.8 C18.4 782.3 20.5 773.2 22.5 764.9 C24.5 756.6 27.1 747.5 30.0 740.0 C32.9 732.5 35.4 726.7 40.0 720.0 C44.6 713.3 50.8 705.6 57.4 700.0 C64.0 694.4 72.0 689.8 79.9 686.2 C87.8 682.7 96.6 680.2 104.9 678.7 C113.2 677.2 120.2 676.7 129.8 677.0 C139.4 677.3 152.9 678.7 162.3 680.5 C171.8 682.3 182.5 686.8 186.5 688.0" stroke="#ff0000" stroke-width="2.2" fill="none" stroke-linecap="round" stroke-linejoin="round"/></svg>
</body></html>
